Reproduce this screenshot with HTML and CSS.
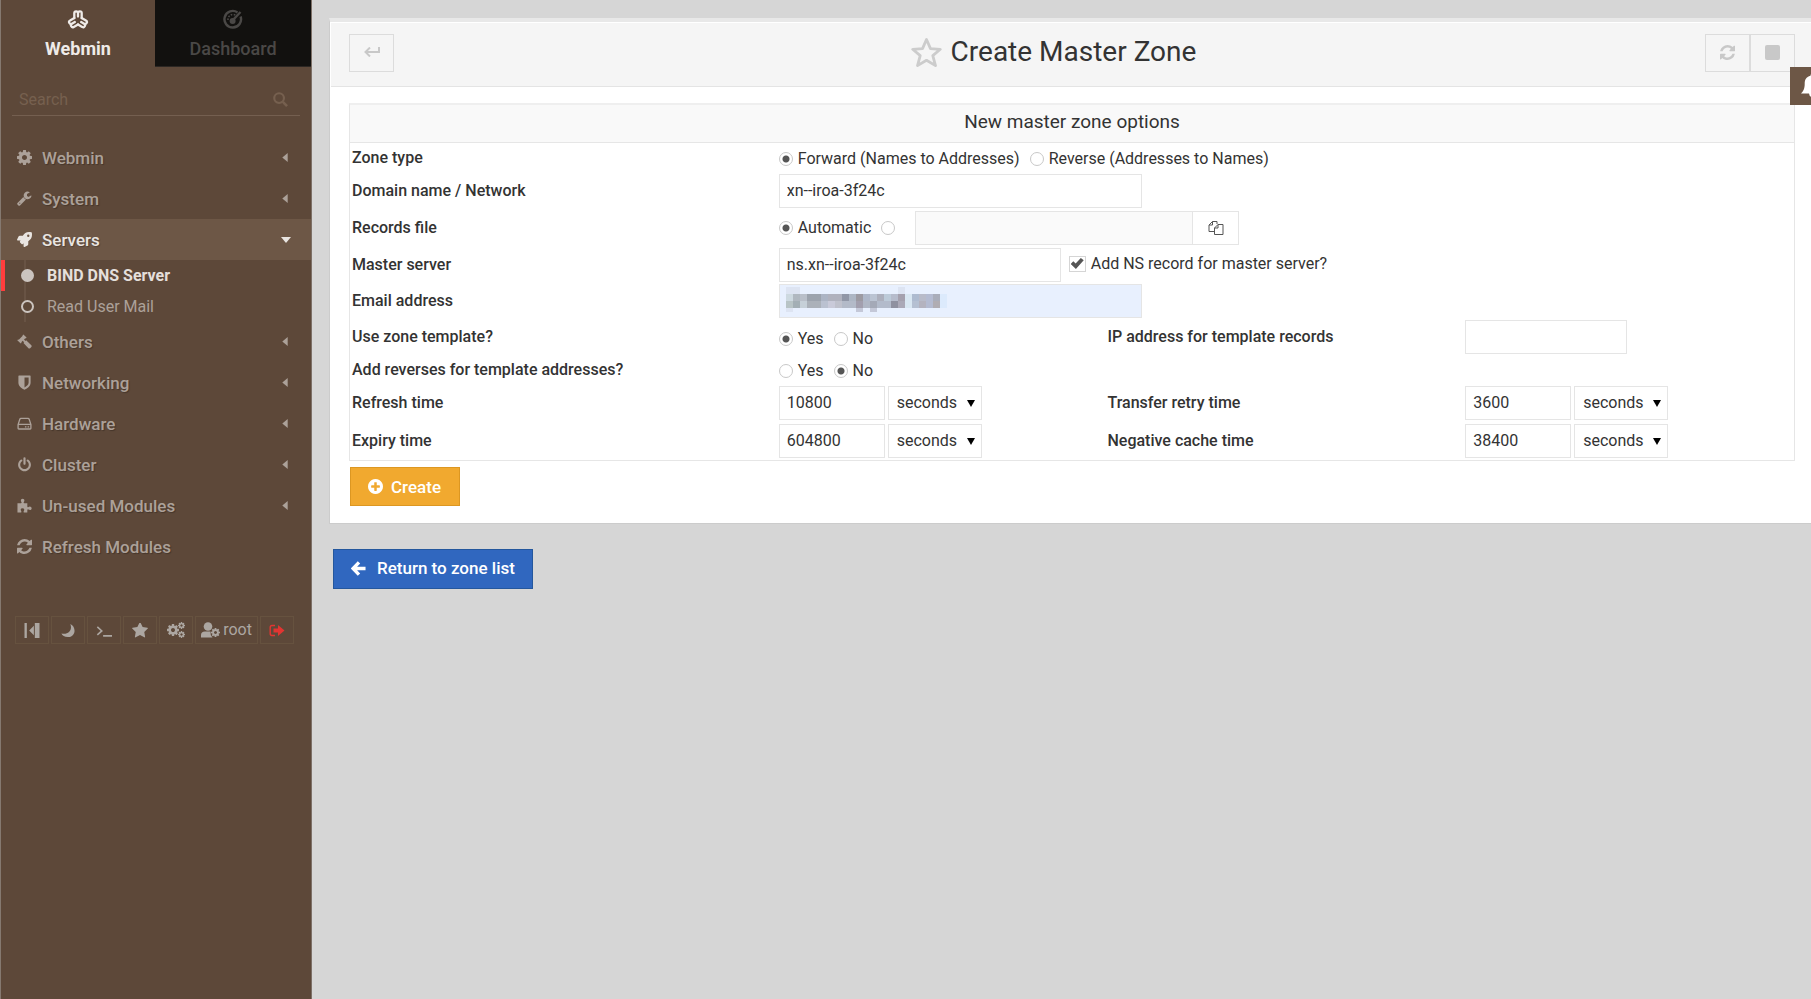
FILE: index.html
```html
<!DOCTYPE html>
<html lang="en">
<head>
<meta charset="utf-8">
<title>Create Master Zone</title>
<link rel="stylesheet" href="styles.css">
</head>
<body>
<svg class="defs" aria-hidden="true">
  <symbol id="cog" viewBox="0 128 1536 1536"><path d="M1024 896q0-106-75-181t-181-75-181 75-75 181 75 181 181 75 181-75 75-181zm512-109v222q0 12-8 23t-20 13l-185 28q-19 54-39 91 35 50 107 138 10 12 10 25t-9 23q-27 37-99 108t-94 71q-12 0-26-9l-138-108q-44 23-91 38-16 136-29 186-7 28-36 28h-222q-14 0-24.500-8.500t-11.500-21.500l-28-184q-49-16-90-37l-141 107q-10 9-25 9-14 0-25-11-126-114-165-168-7-10-7-23 0-12 8-23 15-21 51-66.500t54-70.500q-27-50-41-99l-183-27q-13-2-21-12.500t-8-23.500v-222q0-12 8-23t19-13l186-28q14-46 39-92-40-57-107-138-10-12-10-24 0-10 9-23 26-36 98.500-107.500t94.500-71.500q13 0 26 10l138 107q44-23 91-38 16-136 29-186 7-28 36-28h222q14 0 24.500 8.500t11.500 21.500l28 184q49 16 90 37l142-107q9-9 24-9 13 0 25 10 129 119 165 170 7 8 7 22 0 12-8 23-15 21-51 66.500t-54 70.500q26 50 41 98l183 28q13 2 21 12.500t8 23.500z"/></symbol>
  <symbol id="wrench" viewBox="64 64 1728 1728"><path d="M448 1472q0-26-19-45t-45-19-45 19-19 45 19 45 45 19 45-19 19-45zm644-420l-682 682q-37 37-90 37-52 0-91-37l-106-108q-38-36-38-90 0-53 38-91l681-681q39 98 114.500 173.500t173.500 114.500zm634-435q0 39-23 106-47 134-164.500 217.500t-258.500 83.500q-185 0-316.500-131.500t-131.500-316.500 131.500-316.500 316.500-131.500q58 0 121.500 16.500t107.500 46.500q16 11 16 28t-16 28l-293 169v224l193 107q5-3 79-48.500t135.500-81 70.500-35.500q15 0 23.500 10t8.500 25z"/></symbol>
  <symbol id="rocket" viewBox="0 0 512 512"><path d="M505 19c-1-5-7-11-12-12C461 0 435 0 410 0 307 0 245 55 199 128H95c-16 0-36 12-43 26L3 253a28 28 0 0 0-3 11 24 24 0 0 0 24 24h104l-23 22c-11 12-13 33 0 46l51 51c11 11 32 13 45 0l23-23v104a24 24 0 0 0 24 24 29 29 0 0 0 11-3l98-49c15-7 27-26 27-43V313c72-46 128-109 128-211 0-26 0-51-7-83ZM384 168a40 40 0 1 1 40-40 40 40 0 0 1-40 40Z"/></symbol>
  <symbol id="gavel" viewBox="0 0 16 16"><path d="M6.800.4 10.200 3.800 9.400 4.700 8.800 4.500 7.500 5.900 9 7.400 9.800 6.700 15.500 12.200Q16 13 15.300 13.900L14 15.200Q13 15.800 12.200 15.100L6.900 9.600 7.600 8.800 6.100 7.300 4.600 8.700 4.800 9.400 4 10.200.3 6.600 1.100 5.800 1.900 6 6.100 1.900 5.900 1.200Z"/></symbol>
  <symbol id="shield" viewBox="0 0 14 16"><path fill-rule="evenodd" d="M1 .5H13Q13.500.5 13.500 1V8.200C13.500 11.800 9.600 14.600 7 15.700 4.400 14.600.5 11.800.5 8.200V1Q.5.500 1 .5ZM7 2.600V13.200C8.900 12.200 11.400 10.400 11.400 8.200V2.600Z"/></symbol>
  <symbol id="drive" viewBox="0 0 17 16"><path fill-rule="evenodd" d="M4.500 1.500h8q1.500 0 2 1.300L16.500 9v4.500q0 1.500-1.500 1.500H2Q.5 15 .5 13.500V9L2.500 2.800Q3 1.500 4.500 1.500ZM4.700 3q-.6 0-.8.6L2.300 8.300H14.700L13.100 3.600Q12.900 3 12.300 3ZM2 9.800v3.700h13V9.800ZM9 11h1.700v1.500H9Zm3 0h1.700v1.500H12Z"/></symbol>
  <symbol id="power" viewBox="64 -32 1664 1792"><path d="M1664 896q0 156-61 298t-164 245-245 164-298 61-298-61-245-164-164-245-61-298q0-182 80.500-343t226.500-270q43-32 95.500-25t83.500 50q32 42 24.500 94.500t-49.500 84.500q-98 74-151.500 181t-53.500 228q0 104 40.500 198.500t109.500 163.500 163.500 109.500 198.500 40.500 198.500-40.500 163.500-109.500 109.500-163.500 40.500-198.500q0-121-53.500-228t-151.500-181q-42-32-49.500-84.500t24.500-94.500q31-43 84-50t95 25q146 109 226.500 270t80.500 343zm-640-768v640q0 52-38 90t-90 38-90-38-38-90v-640q0-52 38-90t90-38 90 38 38 90z"/></symbol>
  <symbol id="puzzle" viewBox="0 0 16 16"><path d="M.5 5.500H4.200Q5.300 5.400 4.700 4.300 3.600 2.600 4.600 1.300 6 .3 7.400 1.300 8.400 2.600 7.300 4.300 6.700 5.400 7.800 5.500H11V9Q11.200 10.200 12.300 9.500 13.600 8.600 15 9.500 16.200 10.900 15.200 12.200 14 13.300 12.400 12.300 11.200 11.700 11 12.800V15.500H7.300Q6.700 14.800 7.400 13.600 8.200 12.200 7 11.200 5.800 10.500 4.600 11.200 3.500 12.200 4.300 13.600 5 14.800 4.400 15.500H.5Z"/></symbol>
  <symbol id="refresh" viewBox="128 128 1536 1536"><path d="M1639 1056q0 5-1 7-64 268-268 434.500t-478 166.500q-146 0-282.500-55t-243.500-157l-129 129q-19 19-45 19t-45-19-19-45v-448q0-26 19-45t45-19h448q26 0 45 19t19 45-19 45l-137 137q71 66 161 102t187 36q134 0 250-65t186-179q11-17 53-117 8-23 30-23h192q13 0 22.500 9.500t9.500 22.500zm25-800v448q0 26-19 45t-45 19h-448q-26 0-45-19t-19-45 19-45l138-138q-148-137-349-137-134 0-250 65t-186 179q-11 17-53 117-8 23-30 23h-199q-13 0-22.500-9.500t-9.500-22.500v-7q65-268 270-434.500t480-166.500q146 0 284 55.500t245 156.500l130-129q19-19 45-19t45 19 19 45z"/></symbol>
  <symbol id="caret-left" viewBox="0 0 6 10"><path d="M6 0V10L0 5Z"/></symbol>
  <symbol id="caret-down" viewBox="0 0 10 6"><path d="M0 0H10L5 6Z"/></symbol>
  <symbol id="arrow" viewBox="0 0 8 7"><path d="M0 0H8L4 7Z"/></symbol>
  <symbol id="star" viewBox="64 128 1664 1536"><path d="M1728 647q0 22-26 48l-363 354 86 500q1 7 1 20 0 21-10.500 35.500t-30.500 14.500q-19 0-40-12l-449-236-449 236q-22 12-40 12-21 0-31.500-14.500t-10.500-35.500q0-6 2-20l86-500-364-354q-25-27-25-48 0-37 56-46l502-73 225-455q19-41 49-41t49 41l225 455 502 73q56 9 56 46z"/></symbol>
  <symbol id="plus-circle" viewBox="128 128 1536 1536"><path d="M1344 960v-128q0-26-19-45t-45-19h-256v-256q0-26-19-45t-45-19h-128q-26 0-45 19t-19 45v256h-256q-26 0-45 19t-19 45v128q0 26 19 45t45 19h256v256q0 26 19 45t45 19h128q26 0 45-19t19-45v-256h256q26 0 45-19t19-45zm320-64q0 209-103 385.500t-279.500 279.500-385.500 103-385.500-103-279.500-279.500-103-385.500 103-385.500 279.500-279.500 385.500-103 385.500 103 279.500 279.500 103 385.500z"/></symbol>
</svg>

<aside class="sidebar">
  <nav class="tabs">
    <a class="tab tab-active" href="#">
      <svg class="tab-icon" viewBox="0 0 22 20"><defs><path id="lobe" d="M7.300 9.100V4.200Q7.300 2.300 9.100 2.300T11 4.200V7.500M11 4.200Q11 2.300 12.900 2.300T14.700 4.200V9.100"/></defs><g fill="none" stroke="currentColor" stroke-width="2.300" stroke-linecap="round" stroke-linejoin="round"><use href="#lobe"/><use href="#lobe" transform="rotate(120 11 11.200)"/><use href="#lobe" transform="rotate(240 11 11.200)"/></g></svg>
      <span>Webmin</span>
    </a>
    <a class="tab" href="#">
      <svg class="tab-icon" viewBox="0 0 22 20"><g fill="none" stroke="currentColor"><path d="M15.500 3.400A8.300 8.300 0 1 0 18.600 7.500" stroke-width="2.400"/><path d="M6 11a5 5 0 0 1 8-4.500" stroke-width="1.600" stroke-dasharray="1.600 1.400"/><path d="M10.500 11.500 18.500 3" stroke-width="2.400"/></g><circle cx="10.600" cy="12" r="3" fill="currentColor"/></svg>
      <span>Dashboard</span>
    </a>
  </nav>
  <form class="search" role="search">
    <input type="search" placeholder="Search" aria-label="Search">
    <svg class="search-icon" viewBox="0 0 16 16"><circle cx="6.500" cy="6.500" r="5.200" fill="none" stroke="currentColor" stroke-width="2.300"/><path d="M10.500 10.500 15 15" stroke="currentColor" stroke-width="2.800"/></svg>
  </form>
  <nav class="menu">
    <a class="item" href="#"><svg><use href="#cog"/></svg><span>Webmin</span><svg class="caret"><use href="#caret-left"/></svg></a>
    <a class="item" href="#"><svg><use href="#wrench"/></svg><span>System</span><svg class="caret"><use href="#caret-left"/></svg></a>
    <a class="item item-open" href="#"><svg><use href="#rocket"/></svg><span>Servers</span><svg class="caret caret-open"><use href="#caret-down"/></svg></a>
    <div class="submenu">
      <a class="sub sub-active" href="#"><i class="dot"></i>BIND DNS Server</a>
      <a class="sub" href="#"><i class="dot"></i>Read User Mail</a>
    </div>
    <a class="item" href="#"><svg><use href="#gavel"/></svg><span>Others</span><svg class="caret"><use href="#caret-left"/></svg></a>
    <a class="item" href="#"><svg><use href="#shield"/></svg><span>Networking</span><svg class="caret"><use href="#caret-left"/></svg></a>
    <a class="item" href="#"><svg><use href="#drive"/></svg><span>Hardware</span><svg class="caret"><use href="#caret-left"/></svg></a>
    <a class="item" href="#"><svg><use href="#power"/></svg><span>Cluster</span><svg class="caret"><use href="#caret-left"/></svg></a>
    <a class="item" href="#"><svg><use href="#puzzle"/></svg><span>Un-used Modules</span><svg class="caret"><use href="#caret-left"/></svg></a>
    <a class="item" href="#"><svg><use href="#refresh"/></svg><span>Refresh Modules</span></a>
  </nav>
  <div class="tools">
    <button class="tool" type="button" aria-label="Collapse"><svg viewBox="0 0 16 16"><path d="M0 0H2.500V16H0ZM11 0H16V16H11ZM10 3V13L5 8Z"/></svg></button>
    <button class="tool" type="button" aria-label="Night mode"><svg viewBox="0 0 16 16"><path d="M10.500 1C17 4 16.500 14.500 8.500 15 4.500 15.200 2 13.500 1 11.200 8 13 13 8 10.500 1Z"/></svg></button>
    <button class="tool" type="button" aria-label="Terminal"><svg viewBox="0 0 18 16"><path d="M1.500 4 6.500 8.500 1.500 13M8 14H18" fill="none" stroke="currentColor" stroke-width="1.800"/></svg></button>
    <button class="tool" type="button" aria-label="Favorites"><svg><use href="#star"/></svg></button>
    <button class="tool" type="button" aria-label="Settings"><svg class="cogs" viewBox="0 0 18 16"><use href="#cog" x="0" y="2" width="12" height="12"/><use href="#cog" x="11" y="0" width="7" height="7"/><use href="#cog" x="11" y="9" width="7" height="7"/></svg></button>
    <button class="tool tool-user" type="button"><svg class="user" viewBox="0 0 19 16"><circle cx="7" cy="4.500" r="4.300"/><path d="M0 15.500V13Q0 9.500 4 9.500H9.500Q9 13 11.500 15.500Z"/><use href="#cog" x="10" y="6" width="9" height="9"/></svg><span>root</span></button>
    <button class="tool tool-exit" type="button" aria-label="Log out"><svg viewBox="0 0 16 14"><path d="M6 2H3Q1.200 2 1.200 4V10Q1.200 12 3 12H6" fill="none" stroke="currentColor" stroke-width="1.400"/><path d="M4.500 5H9V1.500L15.500 7 9 12.500V9H4.500Z"/></svg></button>
  </div>
</aside>

<main class="content">
  <section class="card">
    <header class="head">
      <button class="square" type="button" aria-label="Back"><svg class="back-icon" viewBox="0 0 16 10"><path d="M15 0V5H1.500M6 .5 1.500 5 6 9.500" fill="none" stroke="currentColor" stroke-width="2"/></svg></button>
      <div class="title">
        <svg class="title-star" viewBox="0 0 31 31"><path d="M15.500 2.500 19.500 11.600 29.300 12.300 21.800 18.600 24.500 28.600 15.500 23.300 6.500 28.600 9.200 18.600 1.700 12.300 11.500 11.600Z" fill="none" stroke="currentColor" stroke-width="2.800" stroke-linejoin="round"/></svg>
        <h1>Create Master Zone</h1>
      </div>
      <div class="actions">
        <button class="square" type="button" aria-label="Refresh"><svg class="action-icon"><use href="#refresh"/></svg></button>
        <button class="square" type="button" aria-label="Stop"><svg class="action-icon" viewBox="0 0 15 15"><rect width="15" height="15" rx="2"/></svg></button>
      </div>
    </header>

    <form class="form">
      <div class="panel">
        <h2>New master zone options</h2>
        <div class="row row-choice">
          <span class="label">Zone type</span>
          <div class="value wide choices">
            <label><input type="radio" name="type" checked>Forward (Names to Addresses)</label>
            <label><input type="radio" name="type">Reverse (Addresses to Names)</label>
          </div>
        </div>
        <div class="row">
          <label class="label" for="zone">Domain name / Network</label>
          <div class="value wide"><input class="text long" id="zone" type="text" value="xn--iroa-3f24c"></div>
        </div>
        <div class="row">
          <span class="label">Records file</span>
          <div class="value wide choices records">
            <label><input type="radio" name="file" checked>Automatic</label>
            <input type="radio" name="file" aria-label="Records file path">
            <div class="file">
              <input class="text" type="text" aria-label="Records file" disabled>
              <button type="button" aria-label="Choose file"><svg viewBox="0 0 16 16" stroke="currentColor"><path d="M6.500 11.500H1V5L4.500 1.500H9V4M4.500 1.500V5H1M6.500 14.500V8L10 4.500H15V14.500ZM10 4.500V8H6.500"/></svg></button>
            </div>
          </div>
        </div>
        <div class="row">
          <label class="label" for="master">Master server</label>
          <div class="value wide master">
            <input class="text medium" id="master" type="text" value="ns.xn--iroa-3f24c">
            <label class="check"><input type="checkbox" checked>Add NS record for master server?</label>
          </div>
        </div>
        <div class="row row-snug">
          <label class="label" for="email">Email address</label>
          <div class="value wide email">
            <input class="text long filled" id="email" type="email">
            <svg class="mosaic" viewBox="0 0 161 25" shape-rendering="crispEdges" aria-hidden="true">
              <path fill="#dde4f2" d="M0 0h14v7H0zM112 0h7v7h-7zM0 21h7v4H0z"/>
              <path fill="#cdd9e0" d="M0 7h7v7H0z"/><path fill="#b0b8c0" d="M7 7h7v7H7z"/><path fill="#b9bfc9" d="M14 7h7v7h-7z"/><path fill="#9ca3ad" d="M21 7h14v7H21z"/><path fill="#acb4c4" d="M35 7h7v7h-7z"/><path fill="#b0b2be" d="M42 7h14v7H42z"/><path fill="#9197a7" d="M56 7h7v7h-7z"/><path fill="#adb6c4" d="M63 7h7v7h-7z"/><path fill="#9c9aa2" d="M70 7h7v7h-7z"/><path fill="#aeb7c9" d="M77 7h7v7h-7z"/><path fill="#bbc4d3" d="M84 7h7v7h-7z"/><path fill="#adb0bd" d="M91 7h7v7h-7z"/><path fill="#bdcbd9" d="M98 7h7v7h-7z"/><path fill="#b6bccc" d="M105 7h7v7h-7z"/><path fill="#a5a1ae" d="M112 7h7v7h-7z"/><path fill="#d9e7f2" d="M119 7h7v14h-7z"/><path fill="#aebbd0" d="M126 7h7v7h-7z"/><path fill="#b8bbc9" d="M133 7h7v7h-7z"/><path fill="#b4bbd1" d="M140 7h7v14h-7z"/><path fill="#a9adba" d="M147 7h7v7h-7z"/><path fill="#dceafc" d="M154 7h7v14h-7z"/>
              <path fill="#b8c4c6" d="M0 14h7v7H0z"/><path fill="#a3afb5" d="M7 14h7v7H7z"/><path fill="#c6d0d8" d="M14 14h7v7h-7z"/><path fill="#abb1b9" d="M21 14h14v7H21z"/><path fill="#bac1d0" d="M35 14h7v7h-7z"/><path fill="#c9cad9" d="M42 14h7v7h-7z"/><path fill="#bfc1cc" d="M49 14h7v7h-7z"/><path fill="#b3bac8" d="M56 14h14v7H56z"/><path fill="#a29fae" d="M70 14h7v7h-7z"/><path fill="#b0b7c5" d="M77 14h7v7h-7z"/><path fill="#a4a9b7" d="M84 14h7v7h-7z"/><path fill="#b3bbcb" d="M91 14h14v7H91z"/><path fill="#8f91a0" d="M105 14h7v7h-7z"/><path fill="#aba9b7" d="M112 14h7v7h-7z"/><path fill="#b5c0d2" d="M126 14h7v7h-7z"/><path fill="#b4b3bf" d="M133 14h7v7h-7z"/><path fill="#b0adb3" d="M147 14h7v7h-7z"/><path fill="#c4c8d8" d="M70 21h7v4h-7zM84 21h7v4h-7z"/>
            </svg>
          </div>
        </div>
        <div class="row row-snug">
          <span class="label">Use zone template?</span>
          <div class="value choices">
            <label><input type="radio" name="tmpl" checked>Yes</label>
            <label><input type="radio" name="tmpl">No</label>
          </div>
          <label class="label" for="ip">IP address for template records</label>
          <div class="value"><input class="text ip" id="ip" type="text"></div>
        </div>
        <div class="row row-choice">
          <span class="label">Add reverses for template addresses?</span>
          <div class="value choices">
            <label><input type="radio" name="rev">Yes</label>
            <label><input type="radio" name="rev" checked>No</label>
          </div>
        </div>
        <div class="row row-time">
          <label class="label" for="refresh-time">Refresh time</label>
          <div class="value time"><input class="text short" id="refresh-time" type="text" value="10800"><div class="select"><select aria-label="Refresh unit"><option>seconds</option></select><svg><use href="#arrow"/></svg></div></div>
          <label class="label" for="retry">Transfer retry time</label>
          <div class="value time"><input class="text short" id="retry" type="text" value="3600"><div class="select"><select aria-label="Retry unit"><option>seconds</option></select><svg><use href="#arrow"/></svg></div></div>
        </div>
        <div class="row row-time">
          <label class="label" for="expiry">Expiry time</label>
          <div class="value time"><input class="text short" id="expiry" type="text" value="604800"><div class="select"><select aria-label="Expiry unit"><option>seconds</option></select><svg><use href="#arrow"/></svg></div></div>
          <label class="label" for="negative">Negative cache time</label>
          <div class="value time"><input class="text short" id="negative" type="text" value="38400"><div class="select"><select aria-label="Negative cache unit"><option>seconds</option></select><svg><use href="#arrow"/></svg></div></div>
        </div>
      </div>
      <button class="btn btn-create" type="submit"><svg><use href="#plus-circle"/></svg>Create</button>
    </form>
  </section>
  <a class="btn btn-return" href="#"><svg viewBox="0 0 16 16"><path d="M8.500 1.500 2.200 8 8.500 14.500M3 8H15.500" fill="none" stroke="currentColor" stroke-width="3.600"/></svg>Return to zone list</a>
</main>
<button class="bell" type="button" aria-label="Notifications"><svg viewBox="0 0 22 24"><path d="M11 0Q12.500 0 12.500 1.800C17 2.800 18.300 6 18.300 10 18.300 15 20 17.500 22 19.500H14Q13.500 23 11 23T8 19.500H0C2 17.500 3.700 15 3.700 10 3.700 6 5 2.800 9.500 1.800Q9.500 0 11 0Z"/></svg></button>
</body>
</html>
```
FILE: styles.css
```css
* { box-sizing: border-box; }

body {
  margin: 0;
  min-height: 100vh;
  display: flex;
  position: relative;
  overflow-x: hidden;
  background: #d6d6d6;
  color: #333;
  font: 16px/20px Roboto, "Liberation Sans", sans-serif;
}

a { color: inherit; text-decoration: none; }
button, input, select { font: inherit; color: inherit; margin: 0; }
button { cursor: pointer; }
svg { fill: currentColor; flex: none; }
.defs { display: none; }

/* Sidebar */
.sidebar {
  width: 312px;
  flex: none;
  background: #5d4839;
  border-left: 1px solid #857970;
  border-right: 1px solid #7d7067;
  color: #aca199;
}
.tabs { display: grid; grid-template-columns: 154px 1fr; }
.tab {
  height: 67px;
  padding-top: 9px;
  display: flex;
  flex-direction: column;
  align-items: center;
  gap: 10px;
  background: #12110f;
  border-bottom: 1px solid #2c2723;
  color: #4a4846;
  font-size: 18px;
  font-weight: 500;
}
.tab-active { background: #5d4839; border-color: #5d4839; color: #efebe8; font-weight: 700; }
.tab-icon { width: 22px; height: 20px; }

.search {
  margin: 16px 11px 21px;
  padding: 0 12px 0 7px;
  display: flex;
  align-items: center;
  border-bottom: 1px solid #745f50;
  color: #76604f;
}
.search input {
  flex: 1;
  min-width: 0;
  height: 32px;
  padding: 0;
  border: 0;
  outline: 0;
  background: none;
}
.search input::placeholder { color: #76604f; opacity: 1; }
.search-icon { width: 15px; height: 15px; }

.item {
  height: 41px;
  padding: 0 23px 0 16px;
  display: flex;
  align-items: center;
  gap: 10px;
  font-size: 17px;
  font-weight: 500;
  text-shadow: 1px 1px 1px rgba(0, 0, 0, .25);
}
.item > svg { width: 15px; height: 15px; }
.item span { flex: 1; }
.item > .caret { width: 6px; height: 9px; }
.item > .caret-open { width: 10px; height: 6px; margin-right: -3px; }
.item-open { background: #6d5746; color: #e9e5e1; }
.submenu { margin-bottom: -1px; }
.sub {
  height: 31px;
  padding-left: 20px;
  display: flex;
  align-items: center;
  gap: 13px;
  background: linear-gradient(#685344, #685344) 23px 0 / 2px 100% no-repeat;
  border-left: 0 solid #ff3d3d;
}
.sub-active {
  padding-left: 16px;
  background-position: 19px 0;
  border-left-width: 4px;
  color: #e4dfdb;
  font-weight: 700;
}
.dot { width: 13px; height: 13px; border: 2px solid #cbc4bf; border-radius: 50%; background: #5d4839; }
.sub-active .dot { background: #cbc4bf; }

.tools { margin: 49px 14px 0; display: flex; gap: 2px; }
.tool {
  width: 34px;
  height: 28px;
  padding: 0;
  display: flex;
  align-items: center;
  justify-content: center;
  gap: 3px;
  background: none;
  border: 1px solid #66523f;
  color: #aca6a1;
}
.tool svg { width: 16px; height: 15px; }
.tool .cogs { width: 18px; height: 16px; }
.tool .user { width: 19px; height: 16px; }
.tool-user { width: 63px; }
.tool-exit { color: #e23532; }

/* Main */
.content { flex: 1; min-width: 0; padding-top: 18px; }
.card {
  margin-left: 17px;
  background: #fff;
  border-top: 4px solid #e8e8e8;
  border-left: 1px solid #ccc;
  border-bottom: 1px solid #ccc;
}
.head {
  margin: 1px 0 0 1px;
  min-height: 64px;
  padding: 11px 16px 13px 18px;
  display: flex;
  justify-content: space-between;
  align-items: flex-start;
  background: #f5f5f5;
  border-bottom: 1px solid #e4e4e4;
}
.square {
  width: 45px;
  height: 38px;
  padding: 0 0 2px;
  display: flex;
  align-items: center;
  justify-content: center;
  background: none;
  border: 1px solid #dcdcdc;
  color: #c8c8c8;
}
.back-icon { width: 16px; height: 10px; }
.action-icon { width: 15px; height: 15px; }
.actions { display: flex; }
.title { display: flex; align-items: center; gap: 9px; padding-left: 8px; }
.title-star { width: 31px; height: 31px; color: #ccc; }
h1 { margin: 0; font-size: 28px; line-height: 36px; font-weight: 400; }

.form { padding: 16px 16px 17px 19px; }
.panel { border: 1px solid #e6e6e6; border-top: 2px solid #efefef; }
h2 {
  margin: 0;
  padding: 4px 0 8px;
  background: #f9f9f9;
  border-bottom: 1px solid #e6e6e6;
  text-align: center;
  font-size: 19px;
  line-height: 25px;
  font-weight: 400;
}
.row {
  min-height: 37px;
  padding-left: 2px;
  display: grid;
  grid-template-columns: 427fr 329fr 358fr 329fr;
  align-items: center;
}
.row-snug { min-height: 36px; }
.row-choice { min-height: 29px; }
.row-time { min-height: 38px; }
.label { font-weight: 500; }
.wide { grid-column: 2 / -1; }

.text {
  height: 34px;
  padding: 0 7px 1px;
  background: #fff;
  border: 1px solid #e5e5e5;
  outline: 0;
}
.long { width: 363px; }
.medium { width: 282px; }
.short { width: 106px; }
.ip { width: 162px; }
.filled { background: #e8f0fe; }
.value .text { display: block; }

.choices { padding-top: 3px; display: flex; align-items: center; gap: 10px; }
.choices label { display: flex; align-items: center; gap: 5px; }
input[type="radio"] {
  appearance: none;
  width: 14px;
  height: 14px;
  border: 1px solid #c8c8c8;
  border-radius: 50%;
  background: #fff;
}
input[type="radio"]:checked { background: radial-gradient(circle, #555 0 3px, #fff 4px); }
.records { padding-top: 0; }
.file { margin-left: 10px; display: flex; }
.file .text { width: 278px; background: #fafafa; }
.file button {
  width: 47px;
  margin-left: -1px;
  padding: 0;
  display: grid;
  place-items: center;
  background: #fff;
  border: 1px solid #e5e5e5;
  color: #555;
}
.file svg { width: 16px; height: 16px; fill: none; }

.master { display: flex; align-items: center; gap: 8px; }
.check { display: flex; align-items: center; gap: 5px; padding-bottom: 2px; }
.check input {
  appearance: none;
  width: 17px;
  height: 16px;
  display: grid;
  place-items: center;
  border: 1px solid #d5d5d5;
}
.check input:checked::before {
  content: "";
  width: 13px;
  height: 11px;
  background: #555;
  clip-path: polygon(0 55%, 20% 30%, 38% 50%, 78% 0, 100% 20%, 40% 100%);
}

.email { position: relative; }
.mosaic { position: absolute; left: 7px; top: 3px; width: 161px; height: 25px; }

.time { display: flex; gap: 3px; }
.select { position: relative; width: 94px; }
.select select {
  appearance: none;
  width: 100%;
  height: 34px;
  padding: 0 8px 1px;
  background: #fff;
  border: 1px solid #e5e5e5;
  border-radius: 0;
}
.select svg { position: absolute; right: 7px; top: 14px; width: 8px; height: 7px; color: #000; pointer-events: none; }

.btn {
  display: inline-flex;
  align-items: center;
  border: 1px solid;
  color: #fff;
  font-size: 17px;
  font-weight: 500;
}
.btn svg { width: 15px; height: 15px; }
.btn-create { margin: 6px 0 0 1px; height: 39px; padding: 0 18px 0 17px; gap: 8px; background: #f1a92f; border-color: #dc9722; }
.form .btn-create { display: flex; }
.btn-return { margin: 25px 0 0 21px; height: 40px; padding: 0 17px 2px; gap: 11px; background: #3067bf; border-color: #24579d; }

.bell {
  position: absolute;
  right: 0;
  top: 67px;
  width: 21px;
  height: 38px;
  padding: 0 0 0 11px;
  overflow: hidden;
  display: flex;
  align-items: center;
  background: #6d5746;
  border: 0;
  color: #fff;
}
.bell svg { width: 22px; height: 24px; }
```
